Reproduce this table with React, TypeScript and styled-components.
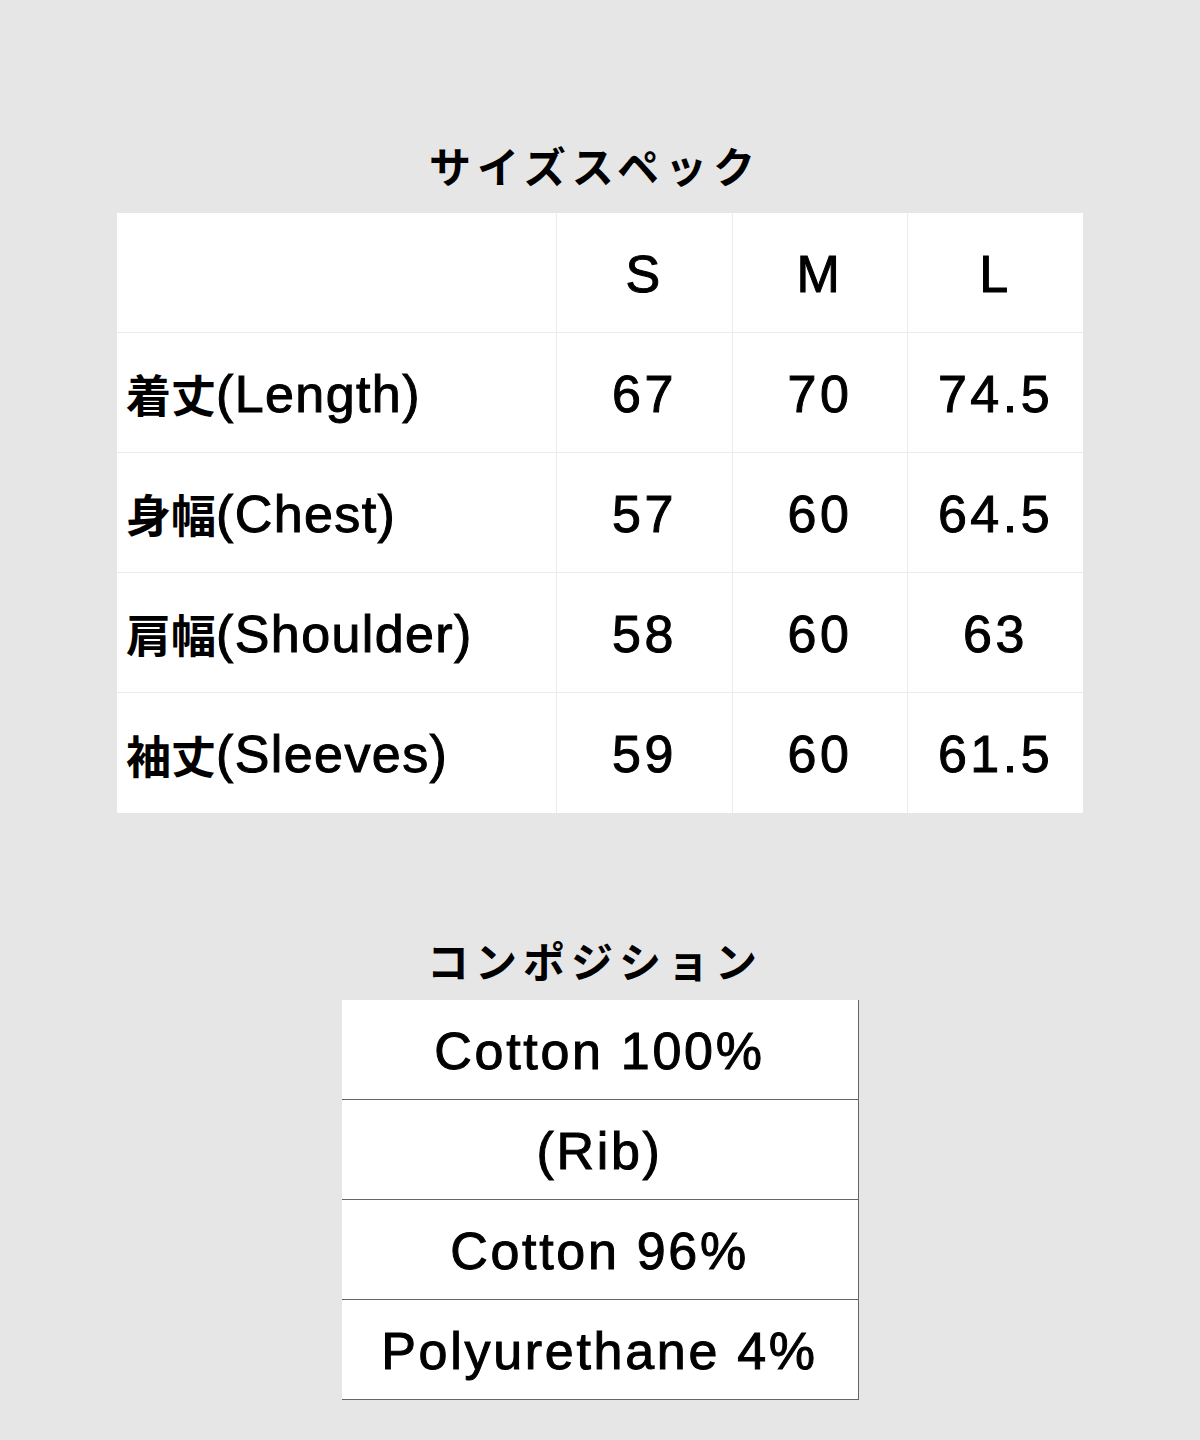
import styled, { createGlobalStyle } from "styled-components";

const GlobalStyle = createGlobalStyle`
  html, body {
    margin: 0;
    padding: 0;
    background: #e6e6e6;
  }
`;

const Page = styled.div`
  width: 1200px;
  height: 1440px;
  box-sizing: border-box;
  padding-top: 143px;
  display: flex;
  flex-direction: column;
  align-items: center;
  background: #e6e6e6;
  font-family: "Liberation Sans", "Noto Sans CJK JP", sans-serif;
  color: #000;
`;

const Heading = styled.h2`
  margin: 0;
  font-family: "Noto Sans CJK JP", sans-serif;
  font-size: 42px;
  line-height: 44px;
  font-weight: 700;
  letter-spacing: 6px;
  padding-right: 10px;
`;

const SpecTable = styled.div`
  margin-top: 26px;
  width: 966px;
  display: grid;
  grid-template-columns: 440px 176px 175px 175px;
  background: #fff;
`;

const SpecCell = styled.div<{ $first?: boolean; $lastRow?: boolean; $lastCol?: boolean }>`
  height: 120px;
  box-sizing: border-box;
  display: flex;
  align-items: center;
  justify-content: ${(p) => (p.$first ? "flex-start" : "center")};
  padding-left: ${(p) => (p.$first ? "9px" : "0")};
  padding-top: 2px;
  border-right: ${(p) => (p.$lastCol ? "none" : "1px solid #ebebeb")};
  border-bottom: ${(p) => (p.$lastRow ? "none" : "1px solid #ebebeb")};
  font-size: 52px;
  letter-spacing: ${(p) => (p.$first ? "1.4px" : "3.5px")};
  -webkit-text-stroke: 1px #000;
  white-space: nowrap;
`;

const Kanji = styled.span`
  font-family: "Noto Sans CJK JP", sans-serif;
  font-size: 45px;
  font-weight: 700;
  -webkit-text-stroke: 0;
  letter-spacing: 0;
`;

const CompHeading = styled(Heading)`
  margin-top: 125px;
`;

const CompTable = styled.div`
  margin-top: 18px;
  width: 516px;
  display: flex;
  flex-direction: column;
  background: #fff;
  border-right: 1px solid #666;
`;

const CompRow = styled.div`
  height: 100px;
  box-sizing: border-box;
  display: flex;
  align-items: center;
  justify-content: center;
  padding-top: 2px;
  border-bottom: 1px solid #666;
  font-size: 52px;
  letter-spacing: 2.7px;
  -webkit-text-stroke: 1px #000;
  white-space: nowrap;
`;

const sizes = ["S", "M", "L"];

const rows: { ja: string; en: string; values: string[] }[] = [
  { ja: "着丈", en: "(Length)", values: ["67", "70", "74.5"] },
  { ja: "身幅", en: "(Chest)", values: ["57", "60", "64.5"] },
  { ja: "肩幅", en: "(Shoulder)", values: ["58", "60", "63"] },
  { ja: "袖丈", en: "(Sleeves)", values: ["59", "60", "61.5"] },
];

const composition = ["Cotton 100%", "(Rib)", "Cotton 96%", "Polyurethane 4%"];

const App = () => {
  return (
    <>
      <GlobalStyle />
      <Page>
        <Heading>サイズスペック</Heading>
        <SpecTable>
          <SpecCell $first />
          {sizes.map((s, i) => (
            <SpecCell key={s} $lastCol={i === sizes.length - 1}>
              {s}
            </SpecCell>
          ))}
          {rows.map((row, r) => {
            const lastRow = r === rows.length - 1;
            return [
              <SpecCell key={row.ja} $first $lastRow={lastRow}>
                <Kanji>{row.ja}</Kanji>
                {row.en}
              </SpecCell>,
              ...row.values.map((v, i) => (
                <SpecCell
                  key={row.ja + i}
                  $lastRow={lastRow}
                  $lastCol={i === row.values.length - 1}
                >
                  {v}
                </SpecCell>
              )),
            ];
          })}
        </SpecTable>
        <CompHeading>コンポジション</CompHeading>
        <CompTable>
          {composition.map((c) => (
            <CompRow key={c}>{c}</CompRow>
          ))}
        </CompTable>
      </Page>
    </>
  );
};

export default App;
